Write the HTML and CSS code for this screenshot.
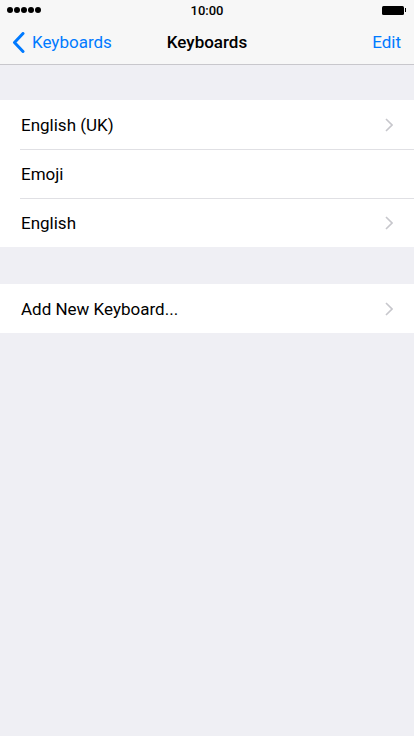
FILE: index.html
```html
<!DOCTYPE html>
<html>
<head>
<meta charset="utf-8">
<link rel="stylesheet" href="styles.css">
</head>
<body>
<div class="screen">
  <div class="top">
    <div class="status">
      <div class="signal"><span></span><span></span><span></span><span></span><span></span></div>
      <div class="time">10:00</div>
      <div class="battery"><div class="batt-body"></div><div class="batt-tip"></div></div>
    </div>
    <div class="nav">
      <div class="back">
        <svg class="back-chev" width="13" height="21" viewBox="0 0 13 21"><path d="M11 1.5 L2.5 10.5 L11 19.5" fill="none" stroke="#007aff" stroke-width="3" stroke-linecap="round" stroke-linejoin="round"/></svg>
        <span>Keyboards</span>
      </div>
      <div class="title">Keyboards</div>
      <div class="edit">Edit</div>
    </div>
  </div>
  <div class="group first">
    <div class="row"><span class="label">English (UK)</span><svg class="chev" width="8" height="14" viewBox="0 0 8 14"><path d="M1 1 L7 7 L1 13" fill="none" stroke="#c7c7cc" stroke-width="1.6"/></svg></div>
    <div class="row"><span class="label">Emoji</span></div>
    <div class="row"><span class="label">English</span><svg class="chev" width="8" height="14" viewBox="0 0 8 14"><path d="M1 1 L7 7 L1 13" fill="none" stroke="#c7c7cc" stroke-width="1.6"/></svg></div>
  </div>
  <div class="group second">
    <div class="row"><span class="label">Add New Keyboard...</span><svg class="chev" width="8" height="14" viewBox="0 0 8 14"><path d="M1 1 L7 7 L1 13" fill="none" stroke="#c7c7cc" stroke-width="1.6"/></svg></div>
  </div>
</div>
</body>
</html>
```
FILE: styles.css
```css
* { box-sizing: border-box; }
html, body { margin: 0; padding: 0; }
body {
  background: #efeff4;
  font-family: Roboto, "Liberation Sans", sans-serif;
  color: #000;
}
.screen { width: 414px; min-height: 736px; background: #efeff4; }
.top { background: #f7f7f7; border-bottom: 1px solid #c8c7cc; }
.status {
  height: 20px;
  display: flex;
  align-items: center;
  justify-content: space-between;
  padding: 0 8px 0 7px;
  position: relative;
}
.signal { display: flex; gap: 1px; }
.signal span { width: 6px; height: 6px; border-radius: 50%; background: #000; }
.time {
  position: absolute;
  left: 0; right: 0;
  text-align: center;
  font-size: 13px;
  font-weight: 500;
  line-height: 21px;
}
.battery { display: flex; align-items: center; }
.batt-body { width: 22px; height: 9px; background: #000; border-radius: 1.5px; }
.batt-tip { width: 1.5px; height: 4px; background: #000; margin-left: 1px; }
.nav {
  height: 44px;
  display: flex;
  align-items: center;
  justify-content: space-between;
  padding: 0 13px 0 12px;
  position: relative;
}
.back { display: flex; align-items: center; gap: 7px; color: #007aff; font-size: 17px; }
.back-chev { display: block; }
.title {
  position: absolute;
  left: 0; right: 0;
  text-align: center;
  font-size: 17px;
  font-weight: 500;
  pointer-events: none;
}
.edit { color: #007aff; font-size: 17px; }
.group { background: #fff; }
.group.first { margin-top: 35px; }
.group.second { margin-top: 37px; }
.row {
  height: 49px;
  display: flex;
  align-items: center;
  justify-content: space-between;
  padding: 0 21px 0 21px;
  font-size: 17px;
  position: relative;
}
.row + .row { border-top: 1px solid #e0e0e4; margin-left: 20px; padding-left: 1px; }
.chev { display: block; }
```
